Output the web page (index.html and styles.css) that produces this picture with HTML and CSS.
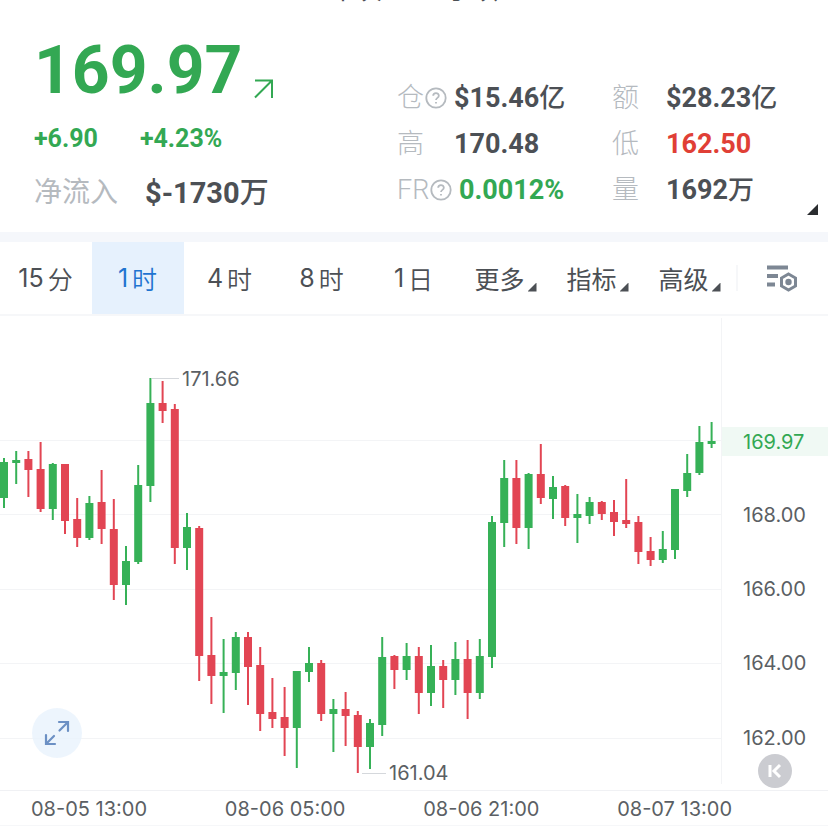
FILE: index.html
```html
<!DOCTYPE html>
<html lang="zh-CN">
<head>
<meta charset="utf-8">
<meta name="viewport" content="width=device-width, initial-scale=1">
<title>169.97</title>
<link rel="stylesheet" href="styles.css">
</head>
<body>
<div class="title-bar"><span>本次</span><span>手续</span></div>
<header class="summary">
  <section class="quote">
    <div class="price">169.97
      <svg class="trend" viewBox="0 0 20 20" aria-hidden="true"><path d="M1 1.500H18V19M17.500 2L1 18.500"/></svg>
    </div>
    <div class="change"><span>+6.90</span><span>+4.23%</span></div>
    <div class="flow"><span class="label">净流入</span><strong>$-1730<span class="unit">万</span></strong></div>
  </section>
  <dl class="stats">
    <div><dt>仓<svg class="help" viewBox="0 0 22 22" aria-hidden="true"><circle cx="11" cy="11" r="9.700"/><path d="M8.200 8.800C8.200 5.300 13.800 5.300 13.800 8.700C13.800 10.900 11 10.800 11 13"/><path d="M11 15V16.500"/></svg></dt><dd>$15.46<span class="unit">亿</span></dd></div>
    <div><dt>额</dt><dd>$28.23<span class="unit">亿</span></dd></div>
    <div><dt>高</dt><dd>170.48</dd></div>
    <div><dt>低</dt><dd class="down">162.50</dd></div>
    <div><dt>FR<svg class="help" viewBox="0 0 22 22" aria-hidden="true"><circle cx="11" cy="11" r="9.700"/><path d="M8.200 8.800C8.200 5.300 13.800 5.300 13.800 8.700C13.800 10.900 11 10.800 11 13"/><path d="M11 15V16.500"/></svg></dt><dd class="up">0.0012%</dd></div>
    <div><dt>量</dt><dd>1692<span class="unit">万</span></dd></div>
  </dl>
  <button class="expand" aria-label="展开"></button>
</header>
<nav class="tabs">
  <button>15<i>分</i></button>
  <button class="active">1<i>时</i></button>
  <button>4<i>时</i></button>
  <button>8<i>时</i></button>
  <button>1<i>日</i></button>
  <button class="menu">更多</button>
  <button class="menu">指标</button>
  <button class="menu">高级</button>
  <button class="settings" aria-label="设置"><svg viewBox="0 0 32 28" aria-hidden="true"><path d="M1 3.500H22M1 12H12M1 20.500H9"/><path class="hex" d="M22.500 10L29.500 14V22L22.500 26L15.500 22V14Z"/><circle cx="22.500" cy="18" r="3.200"/></svg></button>
</nav>
<main class="chart">
  <svg class="plot" viewBox="0 316 828 474" role="img" aria-label="K线图">
    <g class="grid"><path d="M0 440.500H721M0 514.500H721M0 589.500H721M0 663.500H721M0 738.500H721M721.500 318V784"/></g>
    <g id="candles"></g>
    <path class="leader" d="M152 378.500H179M362 773.500H386"/>
    <text x="182" y="386">171.66</text>
    <text x="389" y="780">161.04</text>
    <rect class="current" x="722" y="427" width="106" height="29"/>
    <g>
      <text class="now" x="743" y="449">169.97</text>
      <text x="743" y="522">168.00</text>
      <text x="743" y="596">166.00</text>
      <text x="743" y="670">164.00</text>
      <text x="743" y="745">162.00</text>
    </g>
  </svg>
  <button class="fullscreen" aria-label="全屏"><svg viewBox="0 0 26 26" aria-hidden="true"><path d="M15 2H24V11M23.500 2.500L15.500 10.500M2 15V24H11M2.500 23.500L10 16"/></svg></button>
  <button class="latest" aria-label="最新"><svg viewBox="0 0 34 34" aria-hidden="true"><path d="M12 11V23M22 11L16 17L22 23"/></svg></button>
</main>
<footer class="times"><time>08-05 13:00</time><time>08-06 05:00</time><time>08-06 21:00</time><time>08-07 13:00</time></footer>
<script src="chart.js"></script>
</body>
</html>
```
FILE: styles.css
```css
* { box-sizing: border-box; }
body { margin: 0; background: #fff; color: #4c5055; font-family: Roboto, "Noto Sans CJK SC", sans-serif; }
button { border: 0; padding: 0; background: none; color: inherit; font: inherit; cursor: pointer; }
svg { display: block; fill: none; }
.title-bar { display: flex; justify-content: center; align-items: flex-end; gap: 64px; height: 4px; overflow: hidden; line-height: 28px; font-size: 26px; }
.summary { position: relative; display: grid; grid-template-columns: 363fr 431fr; height: 238px; padding-left: 34px; border-bottom: 10px solid #f5f7fb; }
.quote { padding-top: 33px; }
.price { display: flex; align-items: flex-end; gap: 12px; height: 68px; line-height: 68px; font-size: 66px; font-weight: 700; color: #33a853; }
.trend { width: 20px; height: 20px; margin-bottom: 6px; stroke: #33a853; stroke-width: 2; }
.change { display: flex; gap: 42px; margin-top: 17px; line-height: 34px; font-size: 25px; font-weight: 700; color: #33a853; }
.flow { display: flex; gap: 27px; margin-top: 17px; line-height: 40px; font-size: 28px; }
.flow strong { font-size: 29px; font-weight: 700; }
.unit { font-weight: 500; }
.label, dt { color: #b5babf; font-weight: 400; }
.stats dt { font-weight: 300; }
.stats { display: grid; grid-template-columns: 215fr 216fr; align-content: start; margin: 0; padding-top: 71px; line-height: 46px; font-size: 27px; }
.stats div { display: flex; }
.stats dt { display: flex; align-items: center; flex: none; min-width: 57px; gap: 1px; }
.stats div:nth-child(even) dt { min-width: 54px; }
.stats dd { margin: 0; font-weight: 700; white-space: nowrap; }
.stats .unit { font-size: 26px; }
.stats dd.up { padding-left: 5px; color: #33a853; }
.stats dd.down { color: #e03f36; }
.help { width: 22px; height: 22px; stroke: #b5babf; stroke-width: 1.8; }
.expand { position: absolute; right: 10px; bottom: 17px; width: 11px; height: 11px; background: #2b2d30; clip-path: polygon(100% 0, 100% 100%, 0 100%); }
.tabs { display: grid; grid-template-columns: repeat(9, 1fr); height: 74px; border-bottom: 2px solid #f6f7f9; font-family: Inter, "Noto Sans CJK SC", sans-serif; font-size: 25px; font-weight: 400; }
.tabs button { display: flex; align-items: center; justify-content: center; gap: 4px; padding-right: 1px; }
.tabs i { font-style: normal; font-weight: 350; }
.tabs .active { background: #e6f1fd; color: #1f74d0; }
.tabs .menu { gap: 3px; }
.menu::after { content: ""; width: 9px; height: 9px; margin-top: 18px; background: #4c5055; clip-path: polygon(100% 0, 100% 100%, 0 100%); }
.tabs .settings { justify-content: space-between; padding-right: 30px; }
.settings::before { content: ""; width: 2px; height: 26px; background: #f6f7f9; }
.settings svg { width: 32px; height: 28px; stroke: #7d8794; stroke-width: 4; }
.settings .hex { stroke-width: 3; }
.settings circle { fill: #7d8794; stroke: none; }
.chart { position: relative; }
.plot { width: 100%; font-family: Inter, sans-serif; font-size: 20px; }
.plot text { fill: #5b5f64; }
.plot .now { fill: #33a853; }
.grid { stroke: #f3f4f6; }
.leader { stroke: #d5d8dc; }
.current { fill: #f0f9f4; }
.rise { fill: #36b157; stroke: #36b157; }
.fall { fill: #e24553; stroke: #e24553; }
.rise rect, .fall rect { stroke: none; }
.candle path { stroke-width: 2; }
.fullscreen { position: absolute; left: 32px; bottom: 32px; display: grid; place-items: center; width: 50px; height: 50px; border-radius: 50%; background: #e8f2fdcc; }
.fullscreen svg { width: 26px; height: 26px; stroke: #6c90c4; stroke-width: 2.2; stroke-linecap: round; }
.latest { position: absolute; right: 36px; bottom: 2px; width: 34px; height: 34px; border-radius: 50%; background: #cbccd1; }
.latest svg { stroke: #fff; stroke-width: 3; }
.times { display: flex; justify-content: space-between; height: 36px; padding: 0 96px 0 31px; border-top: 1px solid #f0f1f4; border-bottom: 1px solid #f6f7f9; line-height: 37px; font-family: Inter, sans-serif; font-size: 20px; color: #5b5f64; }
```
FILE: chart.js
```js
// Each candle: direction, high, body top, body bottom, low (chart y units)
const candles = [
  ["rise",458,462,498,508],["rise",451,460,463,484],["fall",451,459,470,497],["fall",442,469,509,512],
  ["rise",463,464,509,520],["fall",464,464,521,534],["fall",498,519,538,547],["rise",496,503,538,540],
  ["fall",470,502,529,544],["fall",499,529,585,600],["rise",546,561,585,605],["rise",465,485,562,564],
  ["rise",378,403,486,502],["fall",381,403,411,423],["fall",404,409,548,564],["rise",513,527,548,570],
  ["fall",526,528,656,681],["fall",617,655,676,704],["rise",639,672,676,713],["rise",632,637,673,690],
  ["fall",632,637,667,705],["fall",647,665,714,731],["fall",678,712,719,728],["fall",687,717,728,756],
  ["rise",671,671,728,768],["rise",647,663,672,682],["fall",660,663,714,721],["rise",699,709,714,752],
  ["fall",692,709,716,746],["fall",711,715,747,773],["rise",719,723,747,769],["rise",637,657,725,736],
  ["fall",655,656,670,689],["rise",643,656,670,680],["fall",647,656,693,714],["rise",645,666,693,706],
  ["fall",660,666,680,708],["rise",642,659,680,695],["fall",640,659,693,719],["rise",639,656,693,699],
  ["rise",516,522,657,668],["rise",460,478,523,547],["fall",460,478,528,544],["rise",473,474,528,549],
  ["fall",444,474,498,504],["rise",476,487,499,519],["fall",485,486,518,526],["rise",494,514,518,543],
  ["rise",497,502,516,524],["fall",501,502,514,520],["fall",500,512,522,536],["fall",479,520,524,528],
  ["fall",516,522,552,564],["fall",537,551,560,566],["rise",531,549,560,563],["rise",489,489,550,559],
  ["rise",454,473,491,497],["rise",426,442,473,475],["rise",422,441,444,448]
];
const step = 12.2;
document.getElementById("candles").innerHTML = candles.map(([dir, high, top, bottom, low], i) => {
  const x = 4 + i * step;
  return `<g class="candle ${dir}"><path d="M${x} ${high}V${low}"/><rect x="${x - 4}" y="${top}" width="8" height="${bottom - top}"/></g>`;
}).join("");
```
